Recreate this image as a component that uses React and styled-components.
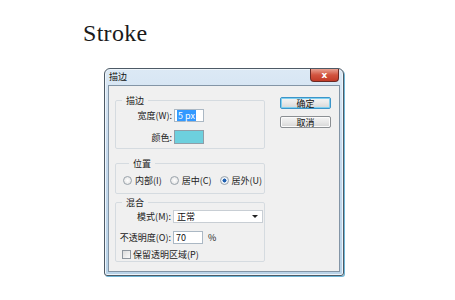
import React from 'react';
import styled, { createGlobalStyle } from 'styled-components';

const GlobalStyle = createGlobalStyle`
  body {
    margin: 0;
    background: #ffffff;
    font-family: "Noto Sans CJK SC", "Noto Sans", sans-serif;
  }
`;

const Page = styled.div`
  width: 455px;
  height: 300px;
  padding: 18px 0 0 83px;
  box-sizing: border-box;
`;

const Heading = styled.h1`
  margin: 0;
  font-family: "Liberation Serif", serif;
  font-weight: normal;
  font-size: 24px;
  line-height: 30px;
  letter-spacing: 0.3px;
  color: #1a1a1a;
`;

const Window = styled.div`
  margin: 20px 0 0 21px;
  width: 240px;
  height: 208px;
  box-sizing: border-box;
  border: 1px solid #4d5a66;
  border-radius: 6px 6px 3px 3px;
  background: linear-gradient(180deg, #dce9f5 0%, #c6daee 40%, #b9d3e8 100%);
  box-shadow: inset 0 0 0 1px #eef5fb, 1px 1px 0 #6fb6d6;
  display: flex;
  flex-direction: column;
  padding: 0 3px 3px;
`;

const TitleBar = styled.div`
  height: 16px;
  display: flex;
  align-items: flex-start;
  justify-content: space-between;
`;

const TitleText = styled.span`
  font-size: 9px;
  line-height: 15px;
  color: #111;
  padding-left: 1px;
`;

const CloseButton = styled.div`
  width: 27px;
  height: 12px;
  margin-right: 1px;
  border: 1px solid #6b2a24;
  border-top: none;
  border-radius: 0 0 4px 4px;
  background: linear-gradient(180deg, #e8a191 0%, #d2543f 50%, #c23b27 100%);
  display: flex;
  align-items: center;
  justify-content: center;
  color: #fff;
  font-family: "DejaVu Sans", sans-serif;
  font-weight: bold;
  font-size: 9px;
  line-height: 1;
`;

const Client = styled.div`
  flex: 1;
  border: 1px solid #8395a6;
  background: #f0f0f0;
  display: flex;
  gap: 15px;
  padding: 9px 6px 0 6px;
  box-sizing: border-box;
`;

const Groups = styled.div`
  width: 150px;
  display: flex;
  flex-direction: column;
`;

const Group = styled.fieldset`
  margin: ${(p) => p.$mt || 0}px 0 0;
  padding: ${(p) => p.$pad};
  border: 1px solid #d5dbe0;
  border-radius: 2px;
  box-sizing: border-box;
  height: ${(p) => p.$h}px;
  min-width: 0;
`;

const Legend = styled.legend`
  margin-left: 6px;
  padding: 0 4px;
  font-size: 9px;
  line-height: 11px;
  color: #222;
`;

const Row = styled.div`
  display: flex;
  align-items: center;
  height: ${(p) => p.$h || 14}px;
  margin-top: ${(p) => p.$mt || 0}px;
  padding-left: ${(p) => p.$pl || 0}px;
`;

const Label = styled.span`
  width: ${(p) => p.$w}px;
  text-align: right;
  font-size: 9px;
  color: #222;
  padding-right: 2px;
  box-sizing: border-box;
  white-space: nowrap;
`;

const Input = styled.div`
  width: ${(p) => p.$w}px;
  height: 13px;
  box-sizing: border-box;
  border: 1px solid #abb8c4;
  background: #fff;
  font-size: 9px;
  line-height: 11px;
  padding-left: 2px;
  color: #111;
  display: flex;
  align-items: center;
`;

const Selected = styled.span`
  background: #3399ff;
  color: #fff;
  padding: 0 1px;
`;

const Swatch = styled.div`
  width: 30px;
  height: 14px;
  box-sizing: border-box;
  border: 1px solid #8f9ea8;
  background: #6dd0de;
`;

const Radios = styled.div`
  display: flex;
  align-items: center;
  gap: 8px;
  height: 14px;
`;

const Radio = styled.label`
  display: flex;
  align-items: center;
  gap: 3px;
  font-size: 9px;
  color: #222;
  white-space: nowrap;
`;

const RadioDot = styled.span`
  width: 7px;
  height: 7px;
  border-radius: 50%;
  border: 1px solid #9aa3ab;
  background: ${(p) =>
    p.$on
      ? 'radial-gradient(circle, #1f5fb0 0 1.8px, #eaf1f8 2.2px)'
      : 'radial-gradient(circle, #ffffff, #dedede)'};
`;

const Select = styled.div`
  width: 90px;
  height: 13px;
  box-sizing: border-box;
  border: 1px solid #c8ced4;
  background: #fff;
  display: flex;
  align-items: center;
  justify-content: space-between;
  padding: 0 4px 0 3px;
  font-size: 9px;
  color: #111;
`;

const Arrow = styled.span`
  width: 0;
  height: 0;
  border-left: 3px solid transparent;
  border-right: 3px solid transparent;
  border-top: 3px solid #222;
`;

const Percent = styled.span`
  margin-left: 5px;
  font-size: 9px;
  color: #222;
`;

const Check = styled.label`
  display: flex;
  align-items: center;
  gap: 2px;
  font-size: 9px;
  color: #222;
`;

const Box = styled.span`
  width: 7px;
  height: 7px;
  border: 1px solid #8e969e;
  background: linear-gradient(135deg, #dcdcdc, #fafafa);
`;

const Buttons = styled.div`
  display: flex;
  flex-direction: column;
  gap: 7px;
  padding-top: 2px;
`;

const Button = styled.div`
  width: 51px;
  height: 12px;
  box-sizing: border-box;
  border: 1px solid ${(p) => (p.$primary ? '#3c95c9' : '#8b8f93')};
  border-radius: 2px;
  background: linear-gradient(180deg, #f4f4f4 0%, #e8e8e8 50%, #d6d6d6 100%);
  box-shadow: ${(p) => (p.$primary ? 'inset 0 0 0 1px #7fd0f0' : 'inset 0 0 0 1px #fbfbfb')};
  display: flex;
  align-items: center;
  justify-content: center;
  font-size: 9px;
  color: #111;
`;

export default function App() {
  return (
    <>
      <GlobalStyle />
      <Page>
        <Heading>Stroke</Heading>
        <Window>
          <TitleBar>
            <TitleText>描边</TitleText>
            <CloseButton>x</CloseButton>
          </TitleBar>
          <Client>
            <Groups>
              <Group $h={54} $pad="2px 0 0 0">
                <Legend>描边</Legend>
                <Row>
                  <Label $w={58}>宽度(W):</Label>
                  <Input $w={30}>
                    <Selected>5 px</Selected>
                  </Input>
                </Row>
                <Row $mt={8}>
                  <Label $w={58}>颜色:</Label>
                  <Swatch />
                </Row>
              </Group>
              <Group $mt={9} $h={36} $pad="4px 0 0 7px">
                <Legend>位置</Legend>
                <Radios>
                  <Radio>
                    <RadioDot />
                    内部(I)
                  </Radio>
                  <Radio>
                    <RadioDot />
                    居中(C)
                  </Radio>
                  <Radio>
                    <RadioDot $on />
                    居外(U)
                  </Radio>
                </Radios>
              </Group>
              <Group $mt={3} $h={65} $pad="1px 0 0 0">
                <Legend>混合</Legend>
                <Row>
                  <Label $w={57}>模式(M):</Label>
                  <Select>
                    正常
                    <Arrow />
                  </Select>
                </Row>
                <Row $mt={7}>
                  <Label $w={57}>不透明度(O):</Label>
                  <Input $w={30}>70</Input>
                  <Percent>%</Percent>
                </Row>
                <Row $mt={3} $pl={6}>
                  <Check>
                    <Box />
                    保留透明区域(P)
                  </Check>
                </Row>
              </Group>
            </Groups>
            <Buttons>
              <Button $primary>确定</Button>
              <Button>取消</Button>
            </Buttons>
          </Client>
        </Window>
      </Page>
    </>
  );
}
